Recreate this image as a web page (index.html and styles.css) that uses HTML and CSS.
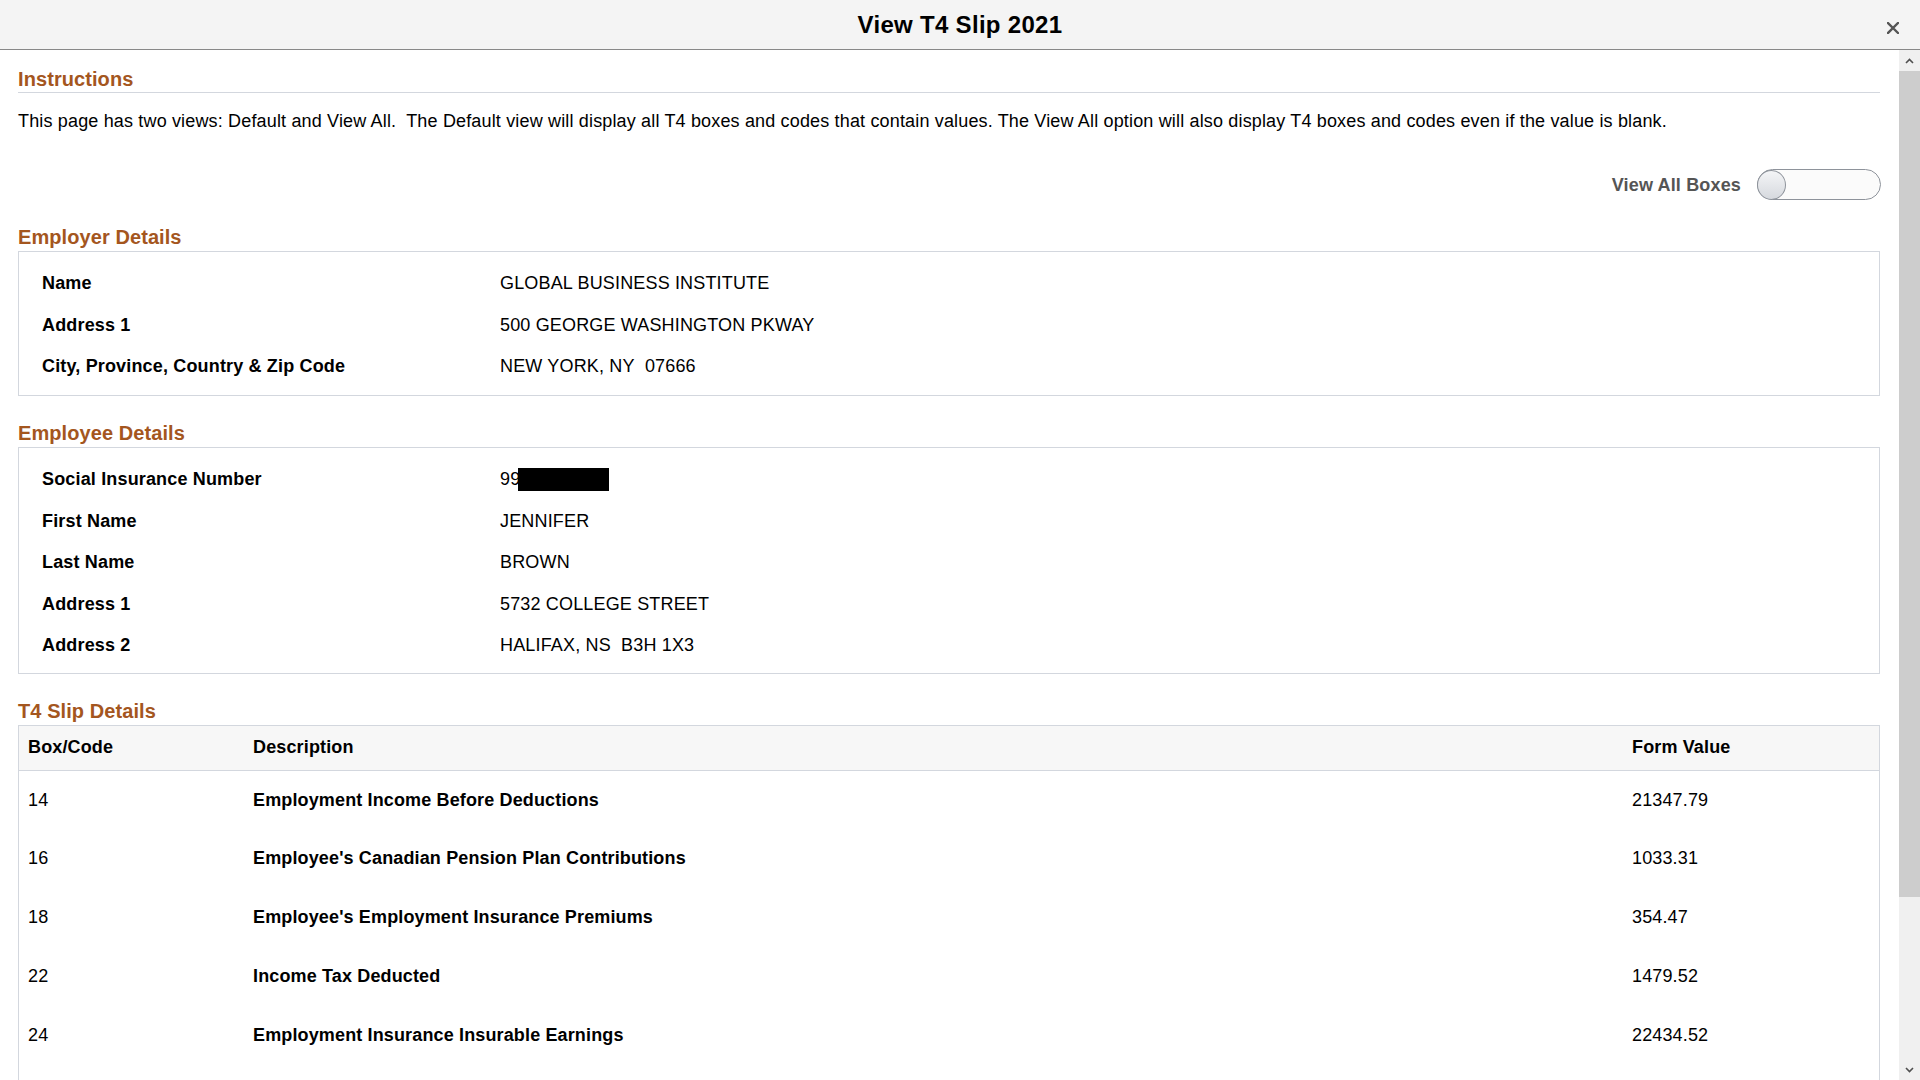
FILE: index.html
```html
<!DOCTYPE html>
<html lang="en">
<head>
<meta charset="utf-8">
<title>View T4 Slip 2021</title>
<link rel="stylesheet" href="styles.css">
</head>
<body>
<div class="modal">
  <header class="titlebar">
    <h1 class="title">View T4 Slip 2021</h1>
    <button class="close" type="button" aria-label="Close">
      <svg width="12" height="12" viewBox="0 0 12 12"><path d="M1 1 L11 11 M11 1 L1 11" stroke="#555" stroke-width="2.4" stroke-linecap="square" fill="none"/></svg>
    </button>
  </header>
  <div class="modal-body">
    <main class="content">
      <h2 class="section-title first">Instructions</h2>
      <p class="intro">This page has two views: Default and View All.&nbsp; The Default view will display all T4 boxes and codes that contain values. The View All option will also display T4 boxes and codes even if the value is blank.</p>

      <div class="toggle-row">
        <span class="toggle-label">View All Boxes</span>
        <span class="toggle"><span class="knob"></span></span>
      </div>

      <h2 class="section-title">Employer Details</h2>
      <div class="details employer">
        <div class="detail-row"><span class="label">Name</span><span class="value">GLOBAL BUSINESS INSTITUTE</span></div>
        <div class="detail-row"><span class="label">Address 1</span><span class="value">500 GEORGE WASHINGTON PKWAY</span></div>
        <div class="detail-row"><span class="label">City, Province, Country &amp; Zip Code</span><span class="value">NEW YORK, NY&nbsp; 07666</span></div>
      </div>

      <h2 class="section-title">Employee Details</h2>
      <div class="details">
        <div class="detail-row"><span class="label">Social Insurance Number</span><span class="value">99<span class="redact"></span></span></div>
        <div class="detail-row"><span class="label">First Name</span><span class="value">JENNIFER</span></div>
        <div class="detail-row"><span class="label">Last Name</span><span class="value">BROWN</span></div>
        <div class="detail-row"><span class="label">Address 1</span><span class="value">5732 COLLEGE STREET</span></div>
        <div class="detail-row"><span class="label">Address 2</span><span class="value">HALIFAX, NS&nbsp; B3H 1X3</span></div>
      </div>

      <h2 class="section-title">T4 Slip Details</h2>
      <div class="slip">
        <div class="slip-head"><span>Box/Code</span><span>Description</span><span>Form Value</span></div>
        <div class="slip-row"><span>14</span><span class="desc">Employment Income Before Deductions</span><span>21347.79</span></div>
        <div class="slip-row"><span>16</span><span class="desc">Employee's Canadian Pension Plan Contributions</span><span>1033.31</span></div>
        <div class="slip-row"><span>18</span><span class="desc">Employee's Employment Insurance Premiums</span><span>354.47</span></div>
        <div class="slip-row"><span>22</span><span class="desc">Income Tax Deducted</span><span>1479.52</span></div>
        <div class="slip-row"><span>24</span><span class="desc">Employment Insurance Insurable Earnings</span><span>22434.52</span></div>
      </div>
    </main>
    <div class="scrollbar" aria-hidden="true">
      <div class="sb-btn">
        <svg width="9" height="6" viewBox="0 0 9 6"><path d="M1 5 L4.5 1.5 L8 5" stroke="#505050" stroke-width="1.6" fill="none"/></svg>
      </div>
      <div class="sb-thumb"></div>
      <div class="sb-track"></div>
      <div class="sb-btn">
        <svg width="9" height="6" viewBox="0 0 9 6"><path d="M1 1 L4.5 4.5 L8 1" stroke="#505050" stroke-width="1.6" fill="none"/></svg>
      </div>
    </div>
  </div>
</div>
</body>
</html>
```
FILE: styles.css
```css
* { box-sizing: border-box; }

html, body {
  margin: 0;
  height: 100%;
  overflow: hidden;
}

body {
  font-family: "Liberation Sans", Arial, sans-serif;
  color: #000;
  background: #fff;
}

.modal {
  height: 1080px;
  display: flex;
  flex-direction: column;
}

.titlebar {
  height: 50px;
  flex: none;
  background: #f4f4f4;
  border-bottom: 1px solid #888;
  display: grid;
  grid-template-columns: 1fr auto 1fr;
  align-items: center;
}

.title {
  grid-column: 2;
  margin: 0;
  font-size: 24px;
  line-height: 28px;
  font-weight: bold;
  letter-spacing: 0.3px;
  color: #000;
}

.close {
  grid-column: 3;
  justify-self: end;
  margin: 7px 21px 0 0;
  width: 12px;
  height: 12px;
  padding: 0;
  border: 0;
  background: none;
  display: flex;
}

.modal-body {
  flex: 1;
  display: flex;
  min-height: 0;
}

.content {
  flex: 1;
  min-width: 0;
  padding: 0 19px 0 18px;
  overflow: hidden;
}

.section-title {
  margin: 26px 0 2px;
  font-size: 20px;
  line-height: 23px;
  font-weight: bold;
  letter-spacing: 0.08px;
  color: #a4561e;
}

.section-title.first {
  margin: 18px 0 0;
  padding-bottom: 1px;
  border-bottom: 1px solid #d3d7de;
}

.intro {
  margin: 18px 0 0;
  font-size: 18px;
  line-height: 21px;
  letter-spacing: 0.16px;
}

.toggle-row {
  margin-top: 37px;
  margin-bottom: 1px;
  display: flex;
  justify-content: flex-end;
  align-items: center;
  gap: 16px;
  margin-right: -1px;
}

.toggle-label {
  font-size: 18px;
  line-height: 21px;
  font-weight: bold;
  letter-spacing: 0.16px;
  color: #555;
  padding-top: 2px;
}

.toggle {
  width: 124px;
  height: 31px;
  border: 1px solid #8e939b;
  border-radius: 16px;
  background: #fbfbfb;
  display: flex;
  align-items: center;
}

.knob {
  width: 29px;
  height: 30px;
  margin-left: -1px;
  border: 1px solid #8e939b;
  border-radius: 50%;
  background: linear-gradient(#f4f5f7, #d6d9de);
}

.details {
  border: 1px solid #d3d7de;
  padding: 11px 0 6px;
}

.details.employer {
  padding-bottom: 7px;
}

.detail-row {
  display: grid;
  grid-template-columns: 458px 1fr;
  align-items: center;
  height: 41.6px;
  padding-left: 23px;
  font-size: 18px;
  line-height: 21px;
  letter-spacing: 0.16px;
}

.label { font-weight: bold; }

.value {
  display: flex;
  align-items: center;
}

.redact {
  display: inline-block;
  width: 91px;
  height: 23px;
  margin-left: -2px;
  background: #000;
}

.slip {
  border: 1px solid #d3d7de;
  border-bottom: 0;
  padding-bottom: 80px;
  font-size: 18px;
  line-height: 21px;
  letter-spacing: 0.14px;
}

.slip-head,
.slip-row {
  display: grid;
  grid-template-columns: 225px 1379px 1fr;
  align-items: center;
}

.slip-head > span,
.slip-row > span {
  padding-left: 9px;
}

.slip-head {
  height: 45px;
  background: #f7f7f7;
  border-bottom: 1px solid #d3d7de;
  font-weight: bold;
}

.slip-row {
  height: 58.75px;
}

.desc { font-weight: bold; }

.scrollbar {
  width: 21px;
  flex: none;
  background: #f0f0f0;
  display: flex;
  flex-direction: column;
}

.sb-btn {
  height: 21px;
  flex: none;
  display: flex;
  align-items: center;
  justify-content: center;
}

.sb-thumb {
  height: 826px;
  flex: none;
  background: #cdcdcd;
}

.sb-track { flex: 1; }
```
